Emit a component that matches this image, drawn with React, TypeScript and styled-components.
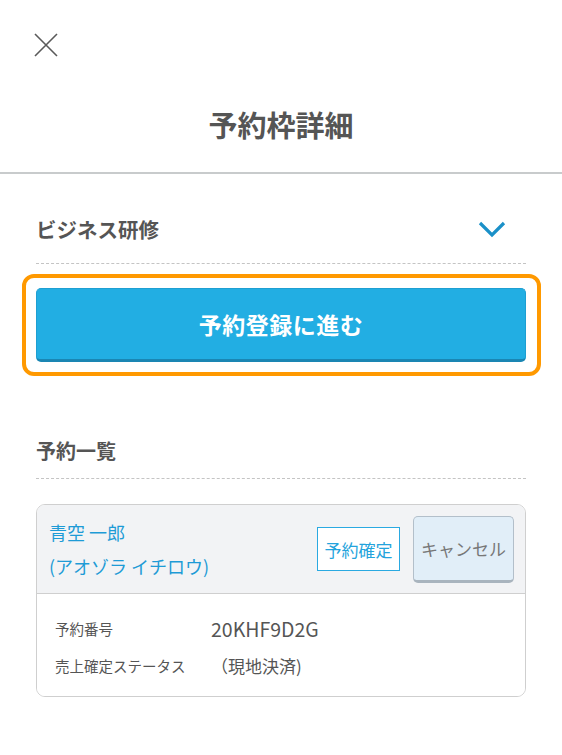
import styled, { createGlobalStyle } from "styled-components"

const GlobalStyle = createGlobalStyle`
  body {
    margin: 0;
    background: #fff;
    font-family: "Noto Sans CJK JP", "Noto Sans", sans-serif;
    color: #555;
  }
`

const App = () => {
  return <Page>
    <GlobalStyle />
    <Header>
      <CloseButton aria-label="閉じる">
        <svg width="24" height="24" viewBox="0 0 24 24">
          <path d="M1 1 L23 23 M23 1 L1 23" stroke="#5a5a5a" strokeWidth="1.6" fill="none" />
        </svg>
      </CloseButton>
      <Title>予約枠詳細</Title>
    </Header>

    <Content>
      <SectionHead $top={37} $bottom={16}>
        <SectionTitle $size={20.5}>ビジネス研修</SectionTitle>
        <svg width="28" height="17" viewBox="0 0 28 17">
          <path d="M2 2 L14 14 L26 2" stroke="#1a90c8" strokeWidth="3.2" fill="none" />
        </svg>
      </SectionHead>

      <Highlight>
        <PrimaryButton>予約登録に進む</PrimaryButton>
      </Highlight>

      <SectionHead $top={57} $bottom={9}>
        <SectionTitle $size={20}>予約一覧</SectionTitle>
      </SectionHead>

      <Card>
        <CardHead>
          <Name>
            <div>青空 一郎</div>
            <div>(アオゾラ イチロウ)</div>
          </Name>
          <StatusBadge>予約確定</StatusBadge>
          <CancelButton>キャンセル</CancelButton>
        </CardHead>
        <CardBody>
          <InfoRow>
            <Label>予約番号</Label>
            <Value $size={19.5}>20KHF9D2G</Value>
          </InfoRow>
          <InfoRow>
            <Label>売上確定ステータス</Label>
            <Value $size={17}>（現地決済)</Value>
          </InfoRow>
        </CardBody>
      </Card>
    </Content>
  </Page>
}

const Page = styled.div`
  width: 562px;
  min-height: 755px;
`

const Header = styled.header`
  display: flex;
  flex-direction: column;
  height: 172px;
  border-bottom: 2px solid #c8cbcc;
`

const CloseButton = styled.button`
  margin: 33px 0 0 34px;
  width: 24px;
  height: 24px;
  padding: 0;
  border: none;
  background: none;
  display: flex;
`

const Title = styled.h1`
  margin: 47px 0 0;
  font-size: 29px;
  line-height: 40px;
  font-weight: 700;
  text-align: center;
  color: #555;
`

const Content = styled.main`
  padding: 0 36px;
`

const SectionHead = styled.div<{ $top: number; $bottom: number }>`
  display: flex;
  align-items: center;
  justify-content: space-between;
  padding: ${p => p.$top}px 20px ${p => p.$bottom}px 0;
  border-bottom: 1px dashed #c4c4c4;
`

const SectionTitle = styled.h2<{ $size: number }>`
  margin: 0;
  font-size: ${p => p.$size}px;
  line-height: 36px;
  font-weight: 700;
  color: #555;
`

const Highlight = styled.div`
  margin: 10px -15px 0 -14px;
  padding: 10px 11px 10px 10px;
  border: 4px solid #ff9900;
  border-radius: 12px;
`

const PrimaryButton = styled.button`
  display: block;
  width: 100%;
  height: 74px;
  border: 1px solid #1e9fd2;
  border-bottom: 3px solid #1a86b3;
  border-radius: 5px;
  background: #22aee3;
  color: #fff;
  font-family: inherit;
  font-size: 23px;
  font-weight: 700;
  letter-spacing: 0.5px;
`

const Card = styled.section`
  margin-top: 25px;
  border: 1px solid #cfcfcf;
  border-radius: 9px;
  overflow: hidden;
`

const CardHead = styled.div`
  display: flex;
  align-items: center;
  height: 88px;
  padding: 0 11px 0 12px;
  background: #f2f3f5;
  border-bottom: 1px solid #cfcfcf;
`

const Name = styled.div`
  flex: 1;
  color: #1e9bd6;
  font-size: 18px;
  line-height: 34px;
`

const StatusBadge = styled.span`
  display: flex;
  align-items: center;
  justify-content: center;
  width: 83px;
  height: 44px;
  box-sizing: border-box;
  border: 1px solid #2aa9e1;
  background: #fff;
  color: #23a3dc;
  font-size: 17px;
`

const CancelButton = styled.button`
  margin-left: 13px;
  width: 101px;
  height: 67px;
  border: 1px solid #b3bfca;
  border-bottom: 3px solid #a9b4be;
  border-radius: 5px;
  background: #e1eef8;
  color: #777;
  font-family: inherit;
  font-size: 17px;
  padding: 0;
`

const CardBody = styled.div`
  padding: 16px 18px 12px;
  background: #fff;
`

const InfoRow = styled.div`
  display: flex;
  align-items: center;
  height: 37px;
`

const Label = styled.span`
  width: 156px;
  font-size: 14.5px;
  color: #555;
`

const Value = styled.span<{ $size: number }>`
  font-size: ${p => p.$size}px;
  color: #555;
`

export default App
